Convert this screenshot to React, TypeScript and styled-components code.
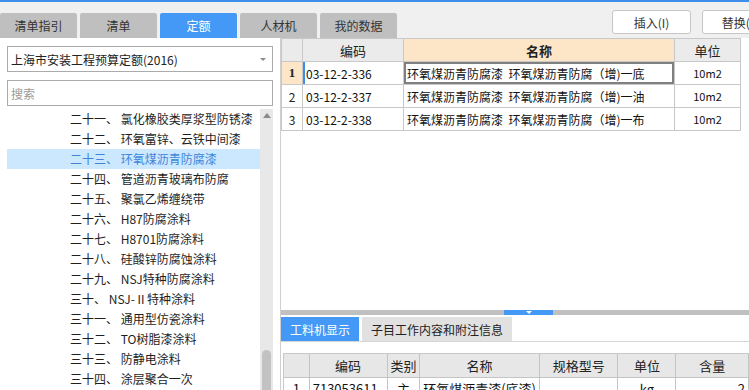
import styled, { createGlobalStyle } from "styled-components";

const GlobalStyle = createGlobalStyle`
  html, body {
    margin: 0;
    padding: 0;
    background: #fff;
    overflow: hidden;
  }
  body {
    font-family: "Noto Sans CJK SC", "Noto Sans", sans-serif;
    font-size: 12px;
    color: #222;
  }
  * {
    box-sizing: border-box;
  }
`;

const mainTabs = ["清单指引", "清单", "定额", "人材机", "我的数据"];

const treeItems = [
  ["二十一、", "氯化橡胶类厚浆型防锈漆"],
  ["二十二、", "环氧富锌、云铁中间漆"],
  ["二十三、", "环氧煤沥青防腐漆"],
  ["二十四、", "管道沥青玻璃布防腐"],
  ["二十五、", "聚氯乙烯缠绕带"],
  ["二十六、", "H87防腐涂料"],
  ["二十七、", "H8701防腐涂料"],
  ["二十八、", "硅酸锌防腐蚀涂料"],
  ["二十九、", "NSJ特种防腐涂料"],
  ["三十、", "NSJ-Ⅱ特种涂料"],
  ["三十一、", "通用型仿瓷涂料"],
  ["三十二、", "TO树脂漆涂料"],
  ["三十三、", "防静电涂料"],
  ["三十四、", "涂层聚合一次"],
];

const quotas = [
  { code: "03-12-2-336", name: "环氧煤沥青防腐漆  环氧煤沥青防腐（增)一底", unit: "10m2" },
  { code: "03-12-2-337", name: "环氧煤沥青防腐漆  环氧煤沥青防腐（增)一油", unit: "10m2" },
  { code: "03-12-2-338", name: "环氧煤沥青防腐漆  环氧煤沥青防腐（增)一布", unit: "10m2" },
];

function App() {
  return (
    <>
      <GlobalStyle />
      <Page>
        <TopLine />
        <Header>
          {mainTabs.map((t) => (
            <MainTab key={t} $active={t === "定额"}>
              {t}
            </MainTab>
          ))}
          <Actions>
            <ActionButton>插入(I)</ActionButton>
            <ActionButton>替换(R)</ActionButton>
          </Actions>
        </Header>
        <Body>
          <LeftPanel>
            <SelectBox>
              <span>上海市安装工程预算定额(2016)</span>
              <Caret />
            </SelectBox>
            <SearchInput placeholder="搜索" readOnly />
            <TreeBox>
              <TreeList>
                {treeItems.map(([no, label]) => (
                  <TreeRow key={no} $selected={no === "二十三、"}>
                    {no} {label}
                  </TreeRow>
                ))}
              </TreeList>
              <ScrollTrack>
                <ScrollArrow />
                <ScrollThumb />
              </ScrollTrack>
            </TreeBox>
          </LeftPanel>

          <RightPanel>
            <UpperArea>
              <Grid>
                <colgroup>
                  <col style={{ width: 21 }} />
                  <col style={{ width: 101 }} />
                  <col style={{ width: 271 }} />
                  <col style={{ width: 66 }} />
                </colgroup>
                <thead>
                  <tr>
                    <HeadCell />
                    <HeadCell>编码</HeadCell>
                    <HeadCell $accent>名称</HeadCell>
                    <HeadCell>单位</HeadCell>
                  </tr>
                </thead>
                <tbody>
                  {quotas.map((q, i) => (
                    <tr key={q.code}>
                      <NumCell $current={i === 0}>{i + 1}</NumCell>
                      <Cell $cursor={i === 0}>{q.code}</Cell>
                      <Cell $focused={i === 0}>{q.name}</Cell>
                      <UnitCell>{q.unit}</UnitCell>
                    </tr>
                  ))}
                </tbody>
              </Grid>
            </UpperArea>

            <Splitter>
              <SplitHandle>
                <DownMark />
              </SplitHandle>
            </Splitter>

            <SubTabs>
              <SubTab $active>工料机显示</SubTab>
              <SubTab>子目工作内容和附注信息</SubTab>
            </SubTabs>

            <LowerArea>
              <Grid>
                <colgroup>
                  <col style={{ width: 26 }} />
                  <col style={{ width: 78 }} />
                  <col style={{ width: 33 }} />
                  <col style={{ width: 117 }} />
                  <col style={{ width: 80 }} />
                  <col style={{ width: 59 }} />
                  <col style={{ width: 74 }} />
                </colgroup>
                <thead>
                  <tr>
                    <SubHead />
                    <SubHead>编码</SubHead>
                    <SubHead>类别</SubHead>
                    <SubHead>名称</SubHead>
                    <SubHead>规格型号</SubHead>
                    <SubHead>单位</SubHead>
                    <SubHead>含量</SubHead>
                  </tr>
                </thead>
                <tbody>
                  <tr>
                    <SubCell $align="center">1</SubCell>
                    <SubCell>713053611</SubCell>
                    <SubCell $align="center">主</SubCell>
                    <SubCell>环氧煤沥青漆(底漆)</SubCell>
                    <SubCell />
                    <SubCell $align="center">kg</SubCell>
                    <SubCell $align="right">2</SubCell>
                  </tr>
                </tbody>
              </Grid>
            </LowerArea>
          </RightPanel>
        </Body>
      </Page>
    </>
  );
}

const Page = styled.div`
  width: 749px;
  height: 390px;
  display: flex;
  flex-direction: column;
  overflow: hidden;
`;

const TopLine = styled.div`
  height: 2px;
  flex-shrink: 0;
  background: #3d8fe9;
`;

const Header = styled.div`
  height: 36px;
  flex-shrink: 0;
  display: flex;
  align-items: flex-end;
  background: #f0f0f0;
  overflow: hidden;
`;

const MainTab = styled.div<{ $active?: boolean }>`
  width: 77px;
  height: 25px;
  margin-right: 3px;
  flex-shrink: 0;
  display: flex;
  align-items: center;
  justify-content: center;
  border-radius: 2px 2px 0 0;
  background: ${(p) => (p.$active ? "#4499f6" : "#bfbfbf")};
  color: ${(p) => (p.$active ? "#fff" : "#333")};
  font-size: 12px;
`;

const Actions = styled.div`
  align-self: flex-start;
  margin-top: 8px;
  margin-left: 212px;
  display: flex;
  gap: 11px;
  flex-shrink: 0;
`;

const ActionButton = styled.div`
  width: 79px;
  height: 24px;
  display: flex;
  align-items: center;
  justify-content: center;
  background: #fff;
  border: 1px solid #c6c6c6;
  border-radius: 3px;
  color: #333;
  font-size: 12px;
  flex-shrink: 0;
`;

const Body = styled.div`
  height: 352px;
  flex-shrink: 0;
  display: flex;
  overflow: hidden;
`;

const LeftPanel = styled.div`
  width: 280px;
  flex-shrink: 0;
  padding: 8px 7px 0 7px;
  display: flex;
  flex-direction: column;
`;

const SelectBox = styled.div`
  height: 26px;
  flex-shrink: 0;
  display: flex;
  align-items: center;
  justify-content: space-between;
  padding: 0 6px 0 3px;
  border: 1px solid #ababab;
  color: #222;
  font-size: 12px;
`;

const Caret = styled.span`
  width: 0;
  height: 0;
  border-left: 3px solid transparent;
  border-right: 3px solid transparent;
  border-top: 3px solid #8c8c8c;
`;

const SearchInput = styled.input`
  margin-top: 8px;
  height: 26px;
  flex-shrink: 0;
  padding: 0 3px;
  border: 1px solid #ababab;
  outline: none;
  font-family: "Noto Sans CJK SC", "Noto Sans", sans-serif;
  font-size: 12px;
  &::placeholder {
    color: #9a9a9a;
  }
`;

const TreeBox = styled.div`
  margin-top: 3px;
  flex: 1;
  min-height: 0;
  display: flex;
  overflow: hidden;
`;

const TreeList = styled.div`
  flex: 1;
  display: flex;
  flex-direction: column;
`;

const TreeRow = styled.div<{ $selected?: boolean }>`
  height: 20px;
  flex-shrink: 0;
  line-height: 20px;
  padding-left: 63px;
  white-space: pre;
  overflow: hidden;
  background: ${(p) => (p.$selected ? "#cce8ff" : "transparent")};
  color: ${(p) => (p.$selected ? "#3d86db" : "#1e1e1e")};
`;

const ScrollTrack = styled.div`
  width: 13px;
  background: #e8e8e8;
  display: flex;
  flex-direction: column;
  align-items: center;
`;

const ScrollArrow = styled.span`
  margin-top: 4px;
  width: 0;
  height: 0;
  border-left: 4px solid transparent;
  border-right: 4px solid transparent;
  border-bottom: 5px solid #8a8a8a;
`;

const ScrollThumb = styled.span`
  margin-top: auto;
  width: 9px;
  height: 40px;
  border-radius: 5px 5px 0 0;
  background: #c2c2c2;
`;

const RightPanel = styled.div`
  flex: 1;
  min-width: 0;
  display: flex;
  flex-direction: column;
  border-left: 1px solid #cfcfcf;
  overflow: hidden;
`;

const UpperArea = styled.div`
  height: 272px;
  flex-shrink: 0;
`;

const Grid = styled.table`
  table-layout: fixed;
  border-collapse: separate;
  border-spacing: 0;
  border-top: 1px solid #c8c8c8;
  border-left: 1px solid #c8c8c8;
  font-size: 12px;
`;

const HeadCell = styled.th<{ $accent?: boolean }>`
  height: 23px;
  padding: 0;
  border-right: 1px solid #c8c8c8;
  border-bottom: 1px solid #c8c8c8;
  background: ${(p) => (p.$accent ? "#fde6c8" : "#ebebeb")};
  font-weight: ${(p) => (p.$accent ? "bold" : "normal")};
  font-size: 13px;
  color: #222;
  text-align: center;
`;

const NumCell = styled.td<{ $current?: boolean }>`
  height: 23px;
  padding: 0;
  border-right: 1px solid #c8c8c8;
  border-bottom: 1px solid #c8c8c8;
  text-align: center;
  background: ${(p) => (p.$current ? "#fde6c8" : "#fff")};
  font-family: ${(p) =>
    p.$current ? '"Liberation Serif", serif' : '"Noto Sans CJK SC", sans-serif'};
  font-weight: ${(p) => (p.$current ? "bold" : "normal")};
  font-size: ${(p) => (p.$current ? "13px" : "12px")};
`;

const Cell = styled.td<{ $cursor?: boolean; $focused?: boolean }>`
  height: 23px;
  padding: 0 3px;
  border-right: 1px solid #c8c8c8;
  border-bottom: 1px solid #c8c8c8;
  white-space: pre;
  overflow: hidden;
  color: #111;
  box-shadow: ${(p) =>
    p.$cursor
      ? "inset 2px 0 0 #3c8ee8"
      : p.$focused
      ? "inset 0 0 0 2px #808080"
      : "none"};
`;

const UnitCell = styled.td`
  height: 23px;
  padding: 0;
  border-right: 1px solid #c8c8c8;
  border-bottom: 1px solid #c8c8c8;
  text-align: center;
  font-size: 11px;
  color: #111;
`;

const Splitter = styled.div`
  height: 5px;
  flex-shrink: 0;
  background: #c0c0c0;
  display: flex;
`;

const SplitHandle = styled.div`
  margin-left: 223px;
  width: 49px;
  background: #4499f6;
  display: flex;
  justify-content: center;
  padding-top: 1px;
`;

const DownMark = styled.span`
  width: 0;
  height: 0;
  border-left: 3px solid transparent;
  border-right: 3px solid transparent;
  border-top: 3px solid #fff;
`;

const SubTabs = styled.div`
  margin-top: 2px;
  height: 25px;
  flex-shrink: 0;
  display: flex;
  gap: 3px;
  border-bottom: 1px solid #d6d6d6;
`;

const SubTab = styled.div<{ $active?: boolean }>`
  height: 24px;
  padding: 0 9px;
  display: flex;
  align-items: center;
  background: ${(p) => (p.$active ? "#4499f6" : "#e1e1e1")};
  color: ${(p) => (p.$active ? "#fff" : "#222")};
  font-size: 12px;
`;

const LowerArea = styled.div`
  margin-top: 11px;
  padding-left: 2px;
  flex-shrink: 0;
`;

const SubHead = styled.th`
  height: 24px;
  padding: 0;
  border-right: 1px solid #c4c4c4;
  border-bottom: 1px solid #c4c4c4;
  background: #e7e7e7;
  font-weight: normal;
  font-size: 13px;
  color: #222;
  text-align: center;
`;

const SubCell = styled.td<{ $align?: "left" | "center" | "right" }>`
  height: 22px;
  padding: 0 3px;
  border-right: 1px solid #c4c4c4;
  border-bottom: 1px solid #c4c4c4;
  text-align: ${(p) => p.$align || "left"};
  white-space: nowrap;
  overflow: hidden;
  font-size: 13px;
  color: #111;
`;

export default App;
